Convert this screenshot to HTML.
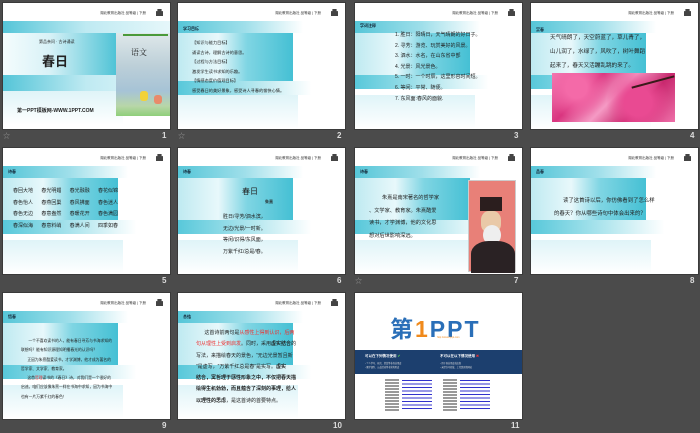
<!DOCTYPE html>
<html><head><meta charset="utf-8"><style>
*{margin:0;padding:0;box-sizing:border-box}
body{width:700px;height:433px;background:#4b4b4b;position:relative;overflow:hidden;font-family:"Liberation Sans","Noto Sans CJK SC",sans-serif}
.s{position:absolute;width:167px;height:126px;background:#fff;overflow:hidden;outline:1px solid #3a3a3a}
.b1{position:absolute;left:0;top:18px;width:167px;height:12px;background:linear-gradient(90deg,#56c6d8,#9fdfea 40%,rgba(255,255,255,0) 75%)}
.b2{position:absolute;left:0;top:30px;width:115px;height:48px;background:linear-gradient(90deg,#bfeaf1,#e8f8fb 35%,#7fd5e3 60%,#45c0d4)}
.b3{position:absolute;left:0;top:78px;width:167px;height:14px;background:linear-gradient(90deg,#58c8da,#a8e3ec 40%,rgba(255,255,255,0) 80%)}
.b4{position:absolute;left:0;top:92px;width:120px;height:34px;background:linear-gradient(180deg,#dff4f8,rgba(255,255,255,0))}
.hd{position:absolute;right:24px;top:8px;font-size:3.5px;color:#333;white-space:nowrap}
.ic{position:absolute;right:7px;top:6px;width:7px;height:7px;background:#444;clip-path:polygon(20% 0,80% 0,80% 30%,100% 30%,100% 100%,0 100%,0 30%,20% 30%)}
.t{position:absolute;left:5px;top:20px;font-size:4px;font-weight:bold;color:#123}
.n{position:absolute;color:#ddd;font-size:8px;font-weight:bold}
.st{position:absolute;color:#999;font-size:7px}
.tx{position:absolute;color:#222;white-space:nowrap}
</style></head><body>

<!-- slide 1 -->
<div class="s" style="left:3px;top:3px">
<div class="hd">湖北教育出版社 品等级 | 下册</div><div class="ic"></div>
<div style="position:absolute;left:0;top:18px;width:167px;height:70px;background:linear-gradient(90deg,#55c5d8,#bfeaf2 50%,#e6f7fa)"></div>
<div style="position:absolute;left:0;top:30px;width:115px;height:42px;background:linear-gradient(90deg,#f4fcfd,#d9f2f7 40%,#4cc2d5)"></div>
<div class="b4" style="top:88px"></div>
<div class="tx" style="left:36px;top:36px;font-size:4px">第品亲问 · 古诗诵读</div>
<div class="tx" style="left:39px;top:48px;font-size:13px;font-weight:bold">春日</div>
<div class="tx" style="left:14px;top:104px;font-size:5px;font-weight:bold">第一PPT模板网-WWW.1PPT.COM</div>
<div style="position:absolute;left:113px;top:30px;width:54px;height:83px;background:linear-gradient(180deg,#dfe8ea,#bccfd8 40%,#a6c3d6 70%,#b8d6a8 88%,#8fcf7a)"></div>
<div style="position:absolute;left:120px;top:31px;width:45px;height:2px;background:#4a9a3a"></div>
<div class="tx" style="left:128px;top:44px;font-size:8px;font-family:'Liberation Serif','Noto Serif CJK SC',serif">语文</div>
<div style="position:absolute;left:137px;top:88px;width:8px;height:10px;background:#f2d23a;border-radius:3px"></div>
<div style="position:absolute;left:151px;top:92px;width:8px;height:9px;background:#e88a6a;border-radius:3px"></div>
</div>
<div class="st" style="left:3px;top:131px">☆</div><div class="n" style="left:162px;top:131px">1</div>

<!-- slide 2 -->
<div class="s" style="left:178px;top:3px">
<div class="hd">湖北教育出版社 品等级 | 下册</div><div class="ic"></div>
<div class="b1"></div><div class="b2"></div><div class="b3"></div><div class="b4"></div>
<div class="t" style="top:23px">学习目标</div>
<div class="tx" style="left:14px;top:35px;font-size:4.2px;line-height:9.6px">【知识与能力目标】<br>诵读古诗，理解古诗的意思。<br>【过程与方法目标】<br>激发学生读书求知的乐趣。<br>【情感态度价值观目标】<br>感受春日的美好景象，感受诗人寻春的愉快心情。</div>
</div>
<div class="st" style="left:178px;top:131px">☆</div><div class="n" style="left:337px;top:131px">2</div>

<!-- slide 3 -->
<div class="s" style="left:355px;top:3px">
<div class="hd">湖北教育出版社 品等级 | 下册</div><div class="ic"></div>
<div class="b1"></div><div class="b2" style="top:30px;height:42px"></div><div class="b3" style="top:72px"></div><div class="b4"></div>
<div class="t">字词注释</div>
<div class="tx" style="left:40px;top:27px;font-size:5px;line-height:10.6px">1. 胜日：阳晴日，天气晴朗的好日子。<br>2. 寻芳：游览、玩赏美好的风景。<br>3. 泗水：水名，在山东省中部<br>4. 光景：风光景色。<br>5. 一时：一个时辰，这里形容时间短。<br>6. 等闲：平常、随便。<br>7. 东风面:春风的面貌.</div>
</div>
<div class="n" style="left:514px;top:131px">3</div>

<!-- slide 4 -->
<div class="s" style="left:531px;top:3px">
<div class="hd">湖北教育出版社 品等级 | 下册</div><div class="ic"></div>
<div class="b1"></div><div class="b2" style="height:42px"></div><div class="b3" style="top:72px"></div><div class="b4"></div>
<div class="t" style="top:24px">赏春</div>
<div class="tx" style="left:19px;top:28px;font-size:5.6px;line-height:14px">天气晴朗了，天空蔚蓝了，草儿青了，<br>山儿润了，水绿了，风吹了，树叶舞蹈<br>起来了，春天又活蹦乱跳的来了。</div>
<div style="position:absolute;left:21px;top:70px;width:123px;height:49px;background:radial-gradient(circle at 20% 30%,#f46aa8 10%,transparent 30%),radial-gradient(circle at 70% 60%,#e94a92 15%,transparent 35%),linear-gradient(135deg,#f37bb3,#d9357f 30%,#f59ac4 50%,#c8286e 70%,#ee6fa8)"></div>
<div style="position:absolute;left:100px;top:78px;width:44px;height:2px;background:#3a1a1a;transform:rotate(-15deg)"></div>
</div>
<div class="n" style="left:690px;top:131px">4</div>

<!-- slide 5 -->
<div class="s" style="left:3px;top:148px">
<div class="hd">湖北教育出版社 品等级 | 下册</div><div class="ic"></div>
<div class="b1"></div><div class="b2" style="height:42px"></div><div class="b3" style="top:72px"></div><div class="b4"></div>
<div class="t" style="top:21px">诗春</div>
<div class="tx" style="left:10px;top:38px;font-size:5px;line-height:11.5px;word-spacing:0">
春回大地&nbsp;&nbsp;&nbsp;&nbsp;&nbsp;&nbsp;春光明媚&nbsp;&nbsp;&nbsp;&nbsp;&nbsp;&nbsp;春光融融&nbsp;&nbsp;&nbsp;&nbsp;&nbsp;&nbsp;春花似锦<br>
春色怡人&nbsp;&nbsp;&nbsp;&nbsp;&nbsp;&nbsp;春燕回巢&nbsp;&nbsp;&nbsp;&nbsp;&nbsp;&nbsp;春风拂面&nbsp;&nbsp;&nbsp;&nbsp;&nbsp;&nbsp;春色迷人<br>
春色无边&nbsp;&nbsp;&nbsp;&nbsp;&nbsp;&nbsp;春意盎然&nbsp;&nbsp;&nbsp;&nbsp;&nbsp;&nbsp;春暖花开&nbsp;&nbsp;&nbsp;&nbsp;&nbsp;&nbsp;春色满园<br>
春深似海&nbsp;&nbsp;&nbsp;&nbsp;&nbsp;&nbsp;春意料峭&nbsp;&nbsp;&nbsp;&nbsp;&nbsp;&nbsp;春满人间&nbsp;&nbsp;&nbsp;&nbsp;&nbsp;&nbsp;四季如春</div>
</div>
<div class="n" style="left:162px;top:276px">5</div>

<!-- slide 6 -->
<div class="s" style="left:178px;top:148px">
<div class="hd">湖北教育出版社 品等级 | 下册</div><div class="ic"></div>
<div class="b1"></div><div class="b2" style="height:42px"></div><div class="b3" style="top:72px"></div><div class="b4"></div>
<div class="t" style="top:21px">诗春</div>
<div class="tx" style="left:64px;top:38px;font-size:8px">春日</div>
<div class="tx" style="left:87px;top:51px;font-size:4px;font-weight:bold">朱熹</div>
<div class="tx" style="left:45px;top:64px;font-size:5px;line-height:11.5px">胜日/寻芳/泗水滨，<br>无边/光景/一时新。<br>等闲/识得/东风面，<br>万紫千红/总是/春。</div>
</div>
<div class="n" style="left:337px;top:276px">6</div>

<!-- slide 7 -->
<div class="s" style="left:355px;top:148px">
<div class="hd">湖北教育出版社 品等级 | 下册</div><div class="ic"></div>
<div class="b1"></div><div class="b2" style="height:42px"></div><div class="b3" style="top:72px"></div><div class="b4"></div>
<div class="t" style="top:21px">诗春</div>
<div class="tx" style="left:14px;top:44px;font-size:5.2px;line-height:12.5px">&nbsp;&nbsp;&nbsp;&nbsp;&nbsp;&nbsp;&nbsp;&nbsp;&nbsp;朱熹是南宋著名的哲学家<br>、文学家、教育家。朱熹酷爱<br>读书，才学渊博，他的文化思<br>想对后世影响深远。</div>
<div style="position:absolute;left:113px;top:32px;width:48px;height:92px;background:#e88078;border:1px solid #ccc">
<div style="position:absolute;left:11px;top:16px;width:22px;height:14px;background:#2b1e1e"></div>
<div style="position:absolute;left:12px;top:30px;width:20px;height:22px;background:#e9c9a8;border-radius:40%"></div>
<div style="position:absolute;left:14px;top:44px;width:18px;height:20px;background:#eee;border-radius:50%"></div>
<div style="position:absolute;left:2px;top:60px;width:44px;height:32px;background:#2a2224;border-radius:40% 40% 0 0"></div>
</div>
</div>
<div class="st" style="left:355px;top:276px">☆</div><div class="n" style="left:514px;top:276px">7</div>

<!-- slide 8 -->
<div class="s" style="left:531px;top:148px">
<div class="hd">湖北教育出版社 品等级 | 下册</div><div class="ic"></div>
<div class="b1"></div><div class="b2" style="height:42px"></div><div class="b3" style="top:72px"></div><div class="b4"></div>
<div class="t" style="top:21px">品春</div>
<div class="tx" style="left:23px;top:47px;font-size:5.4px;line-height:13px">&nbsp;&nbsp;&nbsp;&nbsp;&nbsp;&nbsp;读了这首诗以后，你仿佛看到了怎么样<br>的春天？你从哪些诗句中体会出来的？</div>
</div>
<div class="n" style="left:690px;top:276px">8</div>

<!-- slide 9 -->
<div class="s" style="left:3px;top:293px">
<div class="hd">湖北教育出版社 品等级 | 下册</div><div class="ic"></div>
<div class="b1"></div><div class="b2" style="height:42px"></div><div class="b3" style="top:72px"></div><div class="b4"></div>
<div class="t" style="top:21px">悟春</div>
<div class="tx" style="left:18px;top:44px;font-size:3.8px;line-height:9.3px">&nbsp;&nbsp;&nbsp;&nbsp;&nbsp;&nbsp;&nbsp;一个不喜欢读书的人，能有春日寻芳与书海求知的<br>联想吗？能有知识源理知明播春光的认识吗？<br>&nbsp;&nbsp;&nbsp;&nbsp;&nbsp;&nbsp;正因为朱熹酷爱读书，才学渊博，他才成为著名的<br>哲学家、文学家、教育家。<br>&nbsp;&nbsp;&nbsp;&nbsp;&nbsp;&nbsp;这首<span style="color:#e22">哲理</span>读书的《春日》诗，对我们是一个很好的<br>启迪。咱们应该像朱熹一样在书海中求知，因为书海中<br>也有一片万紫千红的春色！</div>
</div>
<div class="n" style="left:162px;top:421px">9</div>

<!-- slide 10 -->
<div class="s" style="left:178px;top:293px">
<div class="hd">湖北教育出版社 品等级 | 下册</div><div class="ic"></div>
<div class="b1"></div><div class="b2" style="height:42px"></div><div class="b3" style="top:72px"></div><div class="b4"></div>
<div class="t" style="top:21px">总结</div>
<div class="tx" style="left:18px;top:35px;font-size:5px;line-height:11.3px">&nbsp;&nbsp;&nbsp;&nbsp;&nbsp;&nbsp;这首诗前两句是<span style="color:#e33">从感性上得到认识，后两</span><br><span style="color:#e33">句从理性上受到启发</span>。同时，采用<b>虚实结合</b>的<br>写法，来描绘春天的景色，“无边光景暂且新<br>”是虚写，“万紫千红总是春”是实写。<b>虚实</b><br><b>结合，寓哲理于感性形象之中，不仅把春天描</b><br><b>绘得生机勃勃，而且蕴含了深刻的事理，给人</b><br><b>以理性的思虑</b>，是这首诗的首要特点。</div>
</div>
<div class="n" style="left:333px;top:421px">10</div>

<!-- slide 11 -->
<div class="s" style="left:355px;top:293px">
<div class="tx" style="left:35px;top:17px;font-size:23px;font-weight:bold;color:#2a6fb8;letter-spacing:2px">第<span style="color:#f08a1c">1</span>PPT</div>
<div class="tx" style="left:82px;top:43px;font-size:2.5px;color:#f08a1c">http://www.1ppt.com</div>
<div style="position:absolute;left:0;top:57px;width:167px;height:24px;background:#1c3f6e"></div>
<div class="tx" style="left:10px;top:61px;font-size:3.5px;color:#fff;font-weight:bold">可以在下列情况使用 <span style="color:#5c5">✔</span></div>
<div class="tx" style="left:85px;top:61px;font-size:3.5px;color:#fff;font-weight:bold">不可以在以下情况使用 <span style="color:#e33">✖</span></div>
<div class="tx" style="left:10px;top:69px;font-size:2.2px;color:#ddd;line-height:4px">• 个人学习、研究、欣赏等非商业用途<br>• 教学课件、公益活动等非营利用途</div>
<div class="tx" style="left:85px;top:69px;font-size:2.2px;color:#ddd;line-height:4px">• 用于商业用途或出售<br>• 未经许可转载、上传到其他网站</div>
<div style="position:absolute;left:30px;top:86px;width:14px;height:32px;background:repeating-linear-gradient(180deg,#999 0 2px,#fff 2px 3px)"></div>
<div style="position:absolute;left:47px;top:87px;width:30px;height:30px;background:repeating-linear-gradient(180deg,#33c 0 1px,#fff 1px 3.5px)"></div>
<div style="position:absolute;left:88px;top:86px;width:14px;height:32px;background:repeating-linear-gradient(180deg,#999 0 2px,#fff 2px 3px)"></div>
<div style="position:absolute;left:105px;top:87px;width:30px;height:30px;background:repeating-linear-gradient(180deg,#33c 0 1px,#fff 1px 3.5px)"></div>
</div>
<div class="n" style="left:511px;top:421px">11</div>
</body></html>
